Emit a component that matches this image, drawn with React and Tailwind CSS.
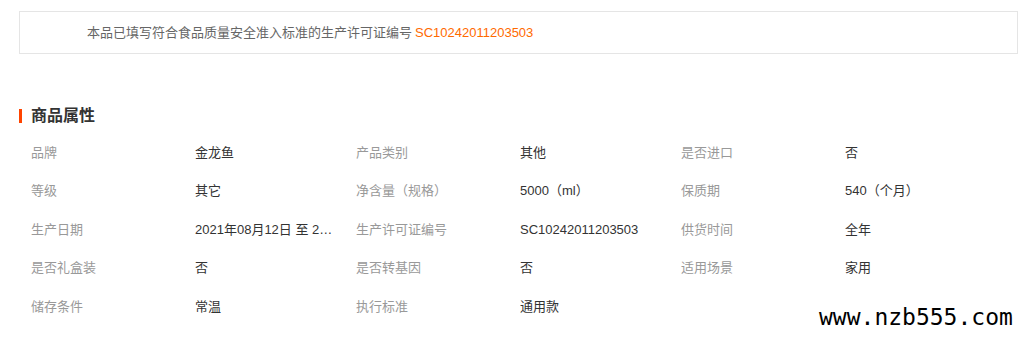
export default function App() {
  const font = { fontFamily: '"Liberation Sans", "Noto Sans CJK SC", sans-serif' };
  const rows = [
    [["品牌", "金龙鱼"], ["产品类别", "其他"], ["是否进口", "否"]],
    [["等级", "其它"], ["净含量（规格）", "5000（ml）"], ["保质期", "540（个月）"]],
    [["生产日期", "2021年08月12日 至 2021年08月12日"], ["生产许可证编号", "SC10242011203503"], ["供货时间", "全年"]],
    [["是否礼盒装", "否"], ["是否转基因", "否"], ["适用场景", "家用"]],
    [["储存条件", "常温"], ["执行标准", "通用款"]],
  ];
  return (
    <div className="relative w-[1024px] h-[354px] bg-white overflow-hidden" style={font}>
      <div className="ml-[19px] mt-[11px] w-[999px] h-[43px] border border-[#e5e5e5] flex items-center pl-[67px] text-[13px] text-[#666]">
        <span>本品已填写符合食品质量安全准入标准的生产许可证编号</span>
        <span className="ml-[3px] text-[#ff6a00]">SC10242011203503</span>
      </div>
      <div className="mt-[55px] ml-[19px] flex items-center h-[14px]">
        <div className="w-[3px] h-[14px] bg-[#ff4400]" />
        <div className="ml-[9px] text-[16px] font-bold text-[#333] leading-none">商品属性</div>
      </div>
      <div className="mt-[10px] ml-[31px]">
        {rows.map((r, i) => (
          <div key={i} className="flex h-[38.6px] items-center text-[13px]">
            {r.map(([k, v], j) => (
              <div key={j} className="flex w-[325px]">
                <div className="w-[164px] text-[#999]">{k}</div>
                <div className="w-[138px] text-[#333] truncate">{v}</div>
              </div>
            ))}
          </div>
        ))}
      </div>
      <div
        className="absolute left-[819px] top-[306px] text-[23px] leading-none text-black"
        style={{ fontFamily: '"DejaVu Sans Mono", monospace' }}
      >
        www.nzb555.com
      </div>
    </div>
  );
}
